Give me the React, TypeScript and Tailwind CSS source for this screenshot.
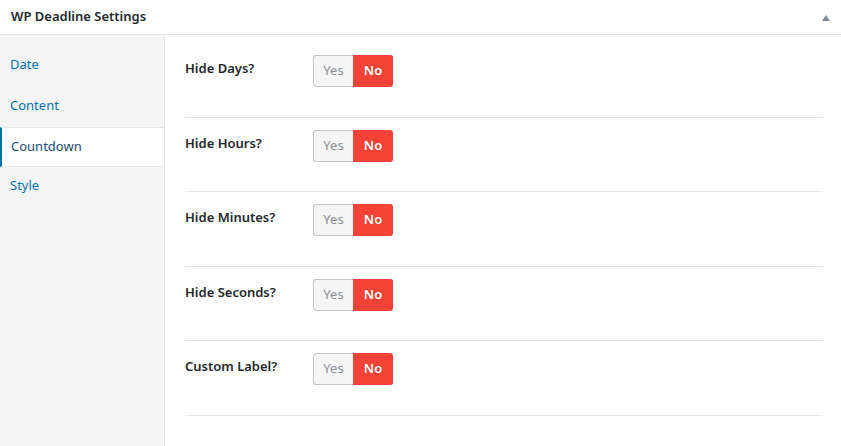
import React from "react";

const tabs = [
  { name: "Date", h: "h-[41px]" },
  { name: "Content", h: "h-[42px]" },
  { name: "Countdown", h: "h-[40px]" },
  { name: "Style", h: "h-[37px]" },
];
const fields = ["Hide Days?", "Hide Hours?", "Hide Minutes?", "Hide Seconds?", "Custom Label?"];

function Toggle() {
  return (
    <div className="flex h-[32px] text-[13px]">
      <span className="flex w-[40px] items-center justify-center rounded-l-[3px] border border-r-0 border-[#c9c3c9] bg-[#f5f5f5] text-[#8a8f96]">
        Yes
      </span>
      <span className="flex w-[40px] items-center justify-center rounded-r-[3px] bg-[#f44336] font-semibold text-white">
        No
      </span>
    </div>
  );
}

export default function App() {
  const active = "Countdown";
  return (
    <div
      className="h-[446px] w-[841px] overflow-hidden bg-white text-[#23282d]"
      style={{ fontFamily: '"Noto Sans", "Open Sans", sans-serif' }}
    >
      <div className="flex h-[35px] items-center justify-between border-b border-[#e5e5e5] pl-[11px] pr-[11px]">
        <h2 className="text-[13px] font-semibold">WP Deadline Settings</h2>
        <svg width="8" height="6" viewBox="0 0 8 6" className="mt-[1px]">
          <path d="M4 0 L8 6 L0 6 Z" fill="#7e8993" />
        </svg>
      </div>
      <div className="flex h-[411px]">
        <ul className="w-[165px] shrink-0 border-r border-[#e5e5e5] bg-[#f5f5f5] pt-[9px]">
          {tabs.map((t) =>
            t.name === active ? (
              <li
                key={t.name}
                className={`flex ${t.h} items-center border-y border-l-2 border-[#e5e5e5] border-l-[#0073aa] bg-white pl-[9px] text-[13px] text-[#1d4d6b]`}
              >
                {t.name}
              </li>
            ) : (
              <li
                key={t.name}
                className={`flex ${t.h} items-center pl-[10px] text-[13px] text-[#0073aa]`}
              >
                {t.name}
              </li>
            )
          )}
        </ul>
        <div className="flex-1 pl-[20px] pr-[18px] pt-[8px]">
          {fields.map((f) => (
            <div key={f} className="flex border-b border-[#e5e5e5] pb-[29.5px] pt-[12px]">
              <label className="w-[128px] pt-[4px] text-[13px] font-semibold">{f}</label>
              <Toggle />
            </div>
          ))}
        </div>
      </div>
    </div>
  );
}
